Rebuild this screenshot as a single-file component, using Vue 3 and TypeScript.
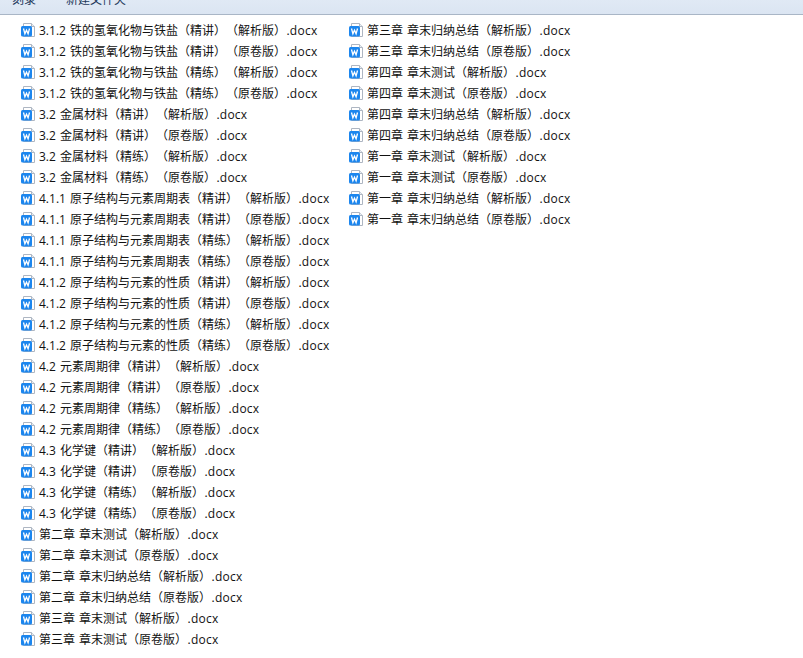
<script setup lang="ts">
const kinds = ['解析版', '原卷版']
const levels = ['精讲', '精练']
function topic(name: string): string[] {
  const out: string[] = []
  for (const l of levels) for (const k of kinds) out.push(`${name}（${l}）（${k}）`)
  return out
}
function chapter(name: string): string[] {
  return kinds.map((k) => `${name}（${k}）`)
}
const left: string[] = [
  ...topic('3.1.2 铁的氢氧化物与铁盐'),
  ...topic('3.2 金属材料'),
  ...topic('4.1.1 原子结构与元素周期表'),
  ...topic('4.1.2 原子结构与元素的性质'),
  ...topic('4.2 元素周期律'),
  ...topic('4.3 化学键'),
  ...chapter('第二章 章末测试'),
  ...chapter('第二章 章末归纳总结'),
  ...chapter('第三章 章末测试'),
]
const right: string[] = [
  ...chapter('第三章 章末归纳总结'),
  ...chapter('第四章 章末测试'),
  ...chapter('第四章 章末归纳总结'),
  ...chapter('第一章 章末测试'),
  ...chapter('第一章 章末归纳总结'),
]
const columns = [left, right]
</script>

<template>
  <div class="window">
    <div class="toolbar">
      <span class="tool">刻录</span>
      <span class="tool">新建文件夹</span>
    </div>
    <div class="files">
      <ul v-for="(col, i) in columns" :key="i" class="column" :class="{ first: i === 0 }">
        <li v-for="name in col" :key="name" class="file">
          <svg class="icon" width="16" height="15" viewBox="0 0 16 15">
            <path d="M2.5 .5H10.5L13.5 3.5V13.5H2.5Z" fill="#fff" stroke="#aeb6c2" />
            <path d="M10.5 .5V3.5H13.5" fill="#e8edf3" stroke="#aeb6c2" />
            <rect x="0" y="3" width="11" height="10.5" rx="1.5" fill="#1c86ee" />
            <path d="M2.5 5.5L3.9 10.8L5.5 7.2L7.1 10.8L8.5 5.5" fill="none" stroke="#fff" stroke-width="1.3" />
          </svg>
          <span class="name">{{ name }}<span class="ext">.docx</span></span>
        </li>
      </ul>
    </div>
  </div>
</template>

<style>
html, body { margin: 0; background: #fff; }
</style>

<style scoped>
.window {
  width: 803px;
  height: 658px;
  overflow: hidden;
  background: #fff;
  font-family: "Open Sans", "Noto Sans CJK SC", sans-serif;
  color: #111;
  text-spacing-trim: space-all;
}
.toolbar {
  height: 31px;
  margin-top: -17px;
  display: flex;
  align-items: center;
  padding-left: 12px;
  gap: 30px;
  background: linear-gradient(#e6eef8, #dbe5f2);
  border-bottom: 1px solid #a9b6c6;
  font-size: 12px;
}
.tool { color: #1e395b; }
.files {
  display: flex;
  padding: 5px 0 0 21px;
}
.column {
  list-style: none;
  margin: 0;
  padding: 0;
}
.column.first { width: 328px; }
.file {
  height: 21px;
  display: flex;
  align-items: center;
  gap: 2px;
  white-space: nowrap;
}
.icon { flex: none; }
.name { font-size: 12px; line-height: 21px; word-spacing: .9px; }
.ext { margin-left: .5px; letter-spacing: .25px; }
</style>
